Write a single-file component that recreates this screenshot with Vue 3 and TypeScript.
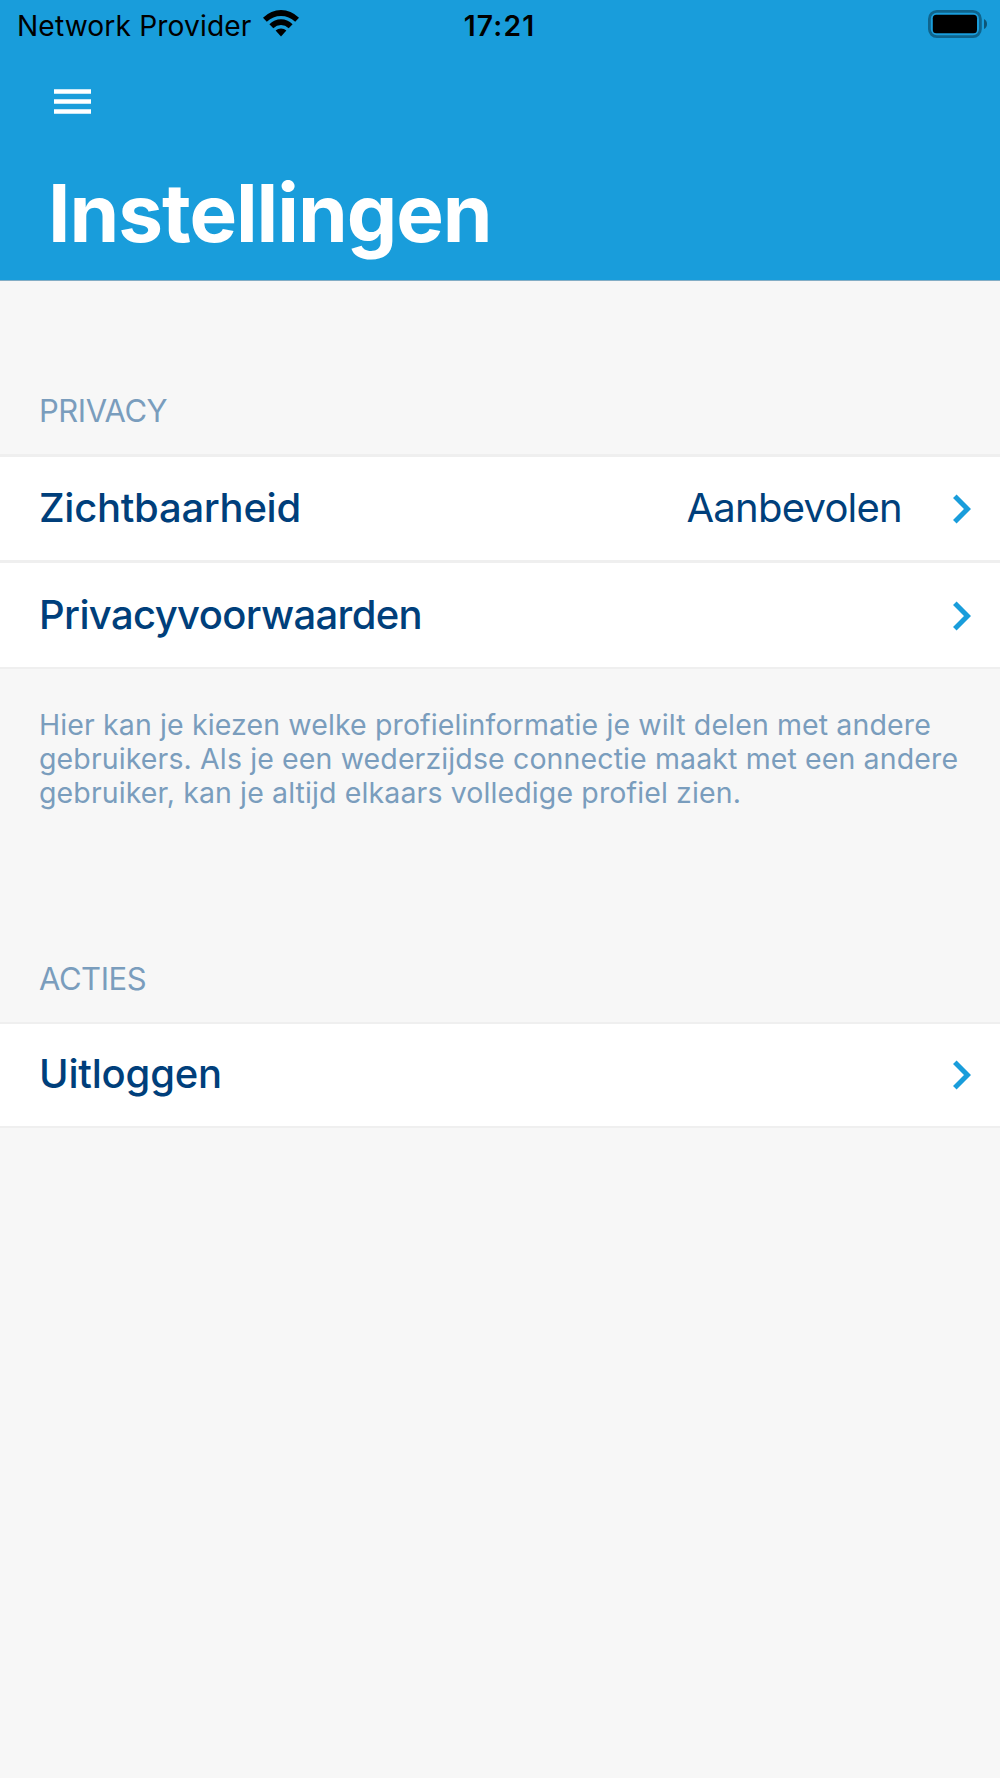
<script setup lang="ts">
interface Row { label: string; tracking: number; value?: string }
interface Note { text: string }

const privacyRows: Row[] = [
  { label: 'Zichtbaarheid', tracking: -0.28, value: 'Aanbevolen' },
  { label: 'Privacyvoorwaarden', tracking: -0.63 },
]
const actionRows: Row[] = [{ label: 'Uitloggen', tracking: -0.2 }]
const note: Note[] = [
  { text: 'Hier kan je kiezen welke profielinformatie je wilt delen met andere' },
  { text: 'gebruikers. Als je een wederzijdse connectie maakt met een andere' },
  { text: 'gebruiker, kan je altijd elkaars volledige profiel zien.' },
]
</script>

<template>
  <div class="screen">
    <header class="header">
      <div class="status">
        <div class="carrier">
          <span>Network Provider</span>
          <svg class="wifi" width="36" height="27" viewBox="0 0 36 27">
            <path d="M0 7.8 Q8 0 18 0 Q28 0 36 7.8 L32.2 11.8 Q26 5.9 18 5.9 Q10 5.9 3.8 11.8 Z" />
            <path d="M6.4 14.2 Q11.6 9.2 18 9.2 Q24.4 9.2 29.6 14.2 L25.7 18.2 Q22.3 15.1 18 15.1 Q13.7 15.1 10.3 18.2 Z" />
            <path d="M12.6 20.6 Q15 18.5 18 18.5 Q21 18.5 23.4 20.6 L18 26.6 Z" />
          </svg>
        </div>
        <span class="time">17:21</span>
        <svg class="battery" width="60" height="28" viewBox="0 0 60 28">
          <rect x="1.4" y="1.4" width="51" height="25.2" rx="7.5" fill="none" stroke="#0f648c" stroke-width="2.8" />
          <rect x="4.8" y="4.7" width="44.2" height="18.6" rx="3.5" />
          <path d="M56 9 Q59 10.5 59 14 Q59 17.5 56 19 Z" fill="#0d5577" />
        </svg>
      </div>
      <svg class="menu" width="37" height="26" viewBox="0 0 37 26">
        <path d="M0 .2h37v4.5H0zM0 10.2h37v4.5H0zM0 20.3h37v4.5H0z" fill="#fff" />
      </svg>
      <h1>Instellingen</h1>
    </header>

    <section class="privacy">
      <h2>PRIVACY</h2>
      <ul>
        <li v-for="row in privacyRows" :key="row.label">
          <span class="label" :style="{ letterSpacing: row.tracking + 'px' }">{{ row.label }}</span>
          <span v-if="row.value" class="value">{{ row.value }}</span>
          <svg class="chevron" width="18" height="30" viewBox="0 0 18 30">
            <path d="M1.8 2.3 L14.5 15 L1.8 27.7" />
          </svg>
        </li>
      </ul>
      <p><span v-for="line in note" :key="line.text" class="line">{{ line.text }}</span></p>
    </section>

    <section class="actions">
      <h2>ACTIES</h2>
      <ul>
        <li v-for="row in actionRows" :key="row.label">
          <span class="label" :style="{ letterSpacing: row.tracking + 'px' }">{{ row.label }}</span>
          <svg class="chevron" width="18" height="30" viewBox="0 0 18 30">
            <path d="M1.8 2.3 L14.5 15 L1.8 27.7" />
          </svg>
        </li>
      </ul>
    </section>
  </div>
</template>

<style>
body { margin: 0; background: #f7f7f7; }
</style>

<style scoped>
.screen { min-height: 1778px; background: #f7f7f7; font-family: Inter, "Liberation Sans", sans-serif; color: #003f7b; }
.header { box-sizing: border-box; height: 281px; background: #199ddb; border-bottom: 1px solid #83adc5; }
.status { display: grid; grid-template-columns: 1fr auto 1fr; align-items: start; height: 50px; padding: 0 12px 0 17px; color: #000; font-size: 28.2px; line-height: 52px; }
.carrier { display: flex; letter-spacing: 0.12px; }
.wifi { margin: 10.4px 0 0 11.4px; }
.time { margin-right: 6px; font-weight: 600; letter-spacing: 1.15px; }
.battery { justify-self: end; margin-top: 10.2px; }
.menu { display: block; margin: 39px 0 0 54px; }
h1 { margin: 50px 0 0 48px; font-size: 80px; line-height: 96px; font-weight: 700; letter-spacing: -1.05px; color: #fff; }
h2 { box-sizing: border-box; margin: 0; padding: 0 39px; font-size: 31px; line-height: 38px; font-weight: 400; letter-spacing: -0.45px; color: #7a9dbd; }
.privacy h2 { height: 173px; padding-top: 111px; }
.actions h2 { height: 212px; padding-top: 150px; }
ul { margin: 0; padding: 0; list-style: none; border-bottom: 2px solid #efefef; }
li { box-sizing: border-box; display: flex; align-items: center; height: 106px; padding: 1px 29px 0 39px; background: #fff; border-top: 3px solid #efefef; font-size: 40px; line-height: 48px; }
li + li { height: 107px; padding-top: 2px; }
.actions li { height: 104px; padding-top: 0; border-top-width: 2px; }
.label, .value { padding-bottom: 3px; }
.label { flex: 1; font-weight: 500; }
.value { margin-right: 51px; letter-spacing: -0.75px; }
.chevron path { fill: none; stroke: #199ddb; stroke-width: 5; }
p { margin: 0; padding: 39px 39px 0; font-size: 28.5px; line-height: 34px; letter-spacing: 0.12px; color: #7a9dbd; }
.line { display: block; white-space: nowrap; }
</style>
